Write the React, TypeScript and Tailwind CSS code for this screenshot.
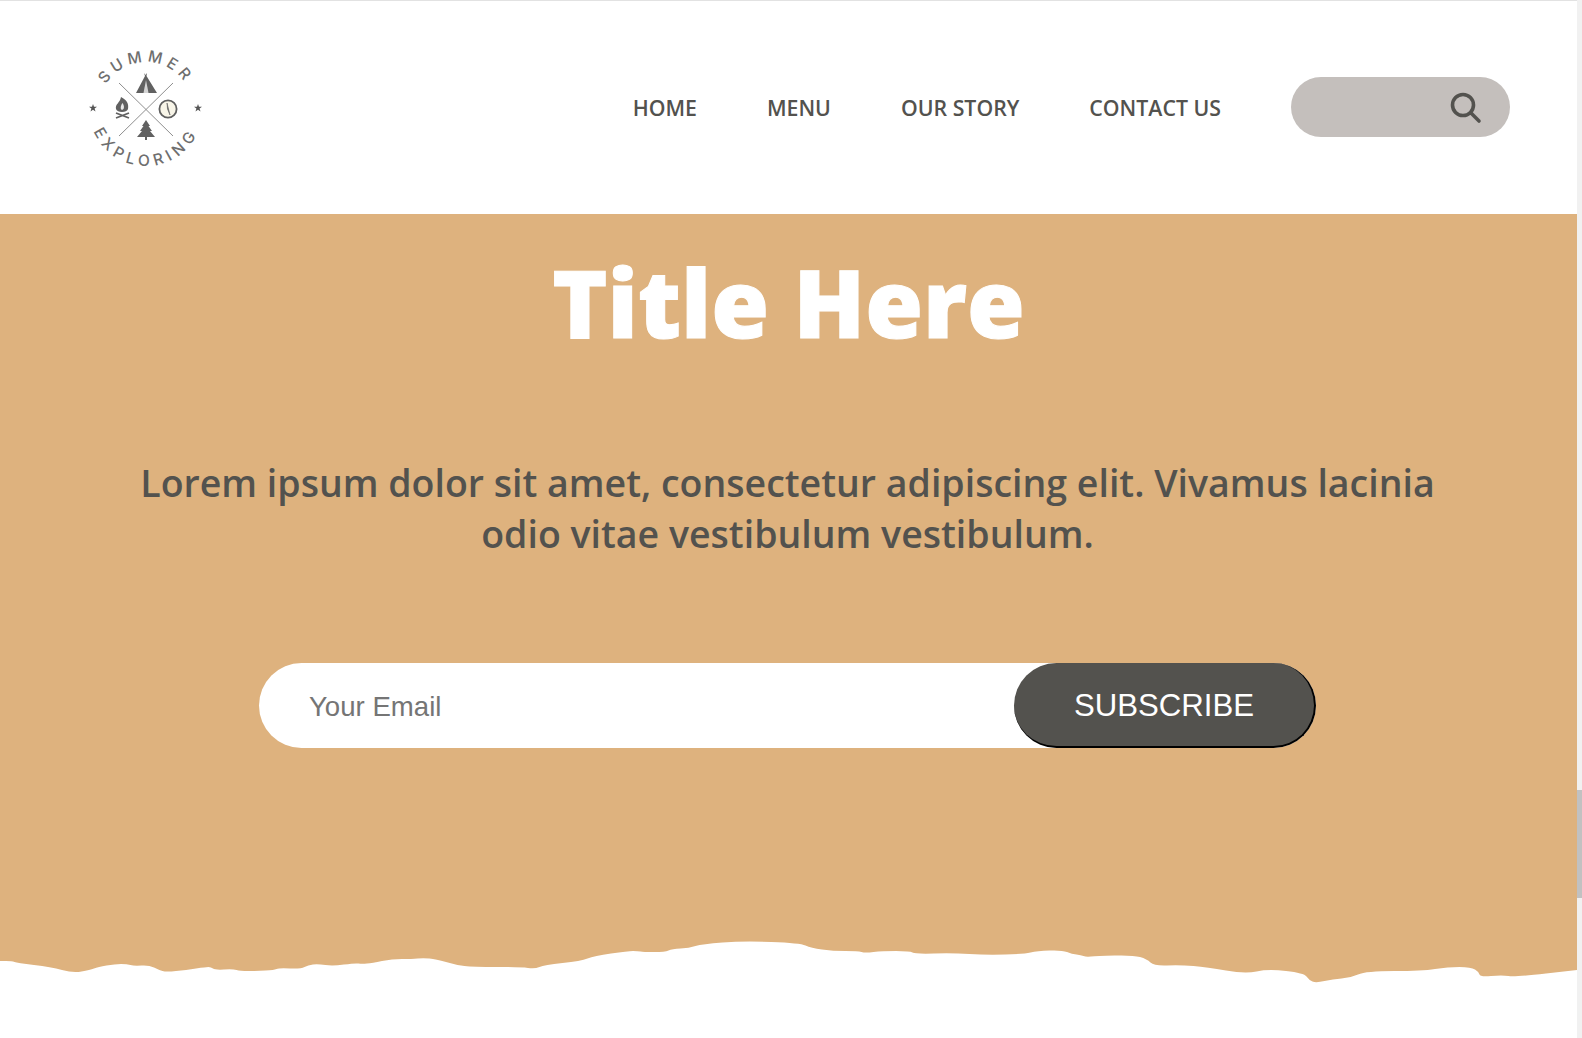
const navLinks = ['HOME', 'MENU', 'OUR STORY', 'CONTACT US']

// torn paper outline, left to right
const tornPoints: [number, number][] = [
  [0, 961], [12, 961], [17, 963], [51, 967], [73, 973], [90, 970], [98, 967], [115, 964], [127, 964], [134, 966],
  [149, 965], [159, 970], [166, 972], [186, 970], [206, 967], [211, 967], [215, 970], [233, 969], [240, 971], [257, 971],
  [274, 970], [279, 968], [301, 969], [308, 965], [318, 964], [333, 966], [355, 963], [362, 964], [372, 963], [392, 959],
  [412, 959], [423, 958], [436, 959], [456, 965], [473, 967], [521, 967], [535, 969], [544, 965], [581, 961], [594, 956],
  [628, 951], [638, 951], [643, 952], [665, 952], [672, 949], [689, 948], [702, 944], [743, 941], [800, 943], [811, 948],
  [833, 951], [858, 951], [865, 953], [882, 951], [910, 951], [915, 954], [953, 953], [986, 955], [1024, 954], [1037, 951],
  [1062, 950], [1072, 954], [1081, 955], [1086, 957], [1096, 956], [1133, 955], [1147, 959], [1154, 966], [1180, 965], [1207, 967],
  [1245, 974], [1268, 969], [1304, 973], [1309, 980], [1316, 983], [1333, 979], [1350, 978], [1366, 971], [1422, 971], [1448, 967],
  [1471, 967], [1479, 972], [1480, 977], [1502, 975], [1515, 977], [1577, 970],
]

function tornPath() {
  let d = `M0 930 L0 ${tornPoints[0][1]}`
  for (let i = 0; i < tornPoints.length - 1; i++) {
    const [x, y] = tornPoints[i]
    const [nx, ny] = tornPoints[i + 1]
    d += ` Q${x} ${y} ${(x + nx) / 2} ${(y + ny) / 2}`
  }
  return `${d} L1577 970 L1577 930 Z`
}

function Star({ x, y }: { x: number; y: number }) {
  return (
    <path
      transform={`translate(${x} ${y})`}
      d="M0 -4 L1 -1.2 L4 -1.2 L1.6 0.6 L2.5 3.5 L0 1.8 L-2.5 3.5 L-1.6 0.6 L-4 -1.2 L-1 -1.2 Z"
      fill="#555"
    />
  )
}

function Logo() {
  return (
    <svg width="160" height="154" viewBox="0 0 160 154" className="shrink-0">
      <defs>
        <path id="logo-top" d="M29 78 A47 47 0 0 1 123 78" />
        <path id="logo-bottom" d="M19 78 A57 57 0 0 0 133 78" />
      </defs>
      <text fontFamily="Inter, sans-serif" fontSize="15.5" fontWeight="500" fill="#6e6e6e" letterSpacing="4.5" textAnchor="middle">
        <textPath href="#logo-top" startOffset="50%">SUMMER</textPath>
      </text>
      <text fontFamily="Inter, sans-serif" fontSize="15.5" fontWeight="500" fill="#6e6e6e" letterSpacing="5" textAnchor="middle">
        <textPath href="#logo-bottom" startOffset="50%">EXPLORING</textPath>
      </text>
      <Star x={23} y={77} />
      <Star x={128} y={77} />
      {/* crossed lines */}
      <path d="M49 52 L103 105 M49 105 L103 52" stroke="#8f8f8f" strokeWidth="1" />
      {/* tent */}
      <path d="M66 62 L75 45 L74 42 L75.5 44 L77 42 L76.5 45 L87 62 Z" fill="#616161" />
      <path d="M76 49 L73.5 62 L78.5 62 Z" fill="#d4d4d4" />
      {/* campfire */}
      <path d="M51 66 C57 69 59 73 58 78 C57 82 47 82 46 78 C45 73 50 72 51 66 Z" fill="#616161" />
      <path d="M52.5 72 C54.5 75 54.5 78 52 79 C50 78 50.5 75 52.5 72 Z" fill="#e8e8e8" />
      <path d="M46 82 L59 87 M59 82 L46 87" stroke="#616161" strokeWidth="1.8" />
      {/* compass */}
      <circle cx="98" cy="78" r="8.6" fill="#f8f5e8" stroke="#5f5f5f" strokeWidth="1.8" />
      <path d="M97 72 L100 84 L97.5 78 Z" fill="#616161" stroke="#616161" strokeWidth="0.6" />
      {/* tree */}
      <path d="M76 89 L80 95 L78.5 95 L82 100 L80 100 L85 106 L77 106 L77 109 L75 109 L75 106 L67 106 L72 100 L70 100 L73.5 95 L72 95 Z" fill="#616161" />
    </svg>
  )
}

export default function App() {
  return (
    <div className="flex h-[1038px] w-full overflow-hidden bg-white font-['Open_Sans',sans-serif]">
      <div className="flex w-[1577px] shrink-0 flex-col">
        {/* Header */}
        <header className="flex h-[214px] items-center border-t border-[#e2e2e2] pl-[70px] pr-[67px]">
          <Logo />
          <nav className="ml-auto flex items-center gap-[70px]">
            {navLinks.map((link) => (
              <a key={link} href="#" className="text-[21.3px] font-semibold leading-none text-[#53524e]">
                {link}
              </a>
            ))}
            <div className="mb-[2px] flex h-[60px] w-[219px] items-center justify-end rounded-full bg-[#c4bfbc] pr-[27px]">
              <svg width="34" height="34" viewBox="0 0 34 34" fill="none" stroke="#53524e" strokeWidth="3.6" strokeLinecap="round">
                <circle cx="14" cy="15" r="10.5" />
                <path d="M22 23 L30 31" />
              </svg>
            </div>
          </nav>
        </header>

        {/* Hero */}
        <section className="flex h-[727px] flex-col items-center bg-[#deb27e]">
          <h1 className="mt-[30px] text-[93.6px] font-extrabold leading-[116px] text-white [-webkit-text-stroke:1px_white]">
            Title Here
          </h1>
          <p className="mr-[2px] mt-[97px] w-[1320px] text-center text-[37.5px] font-semibold leading-[51px] text-[#53524e]">
            Lorem ipsum dolor sit amet, consectetur adipiscing elit. Vivamus lacinia odio vitae vestibulum vestibulum.
          </p>
          <form className="mr-[2px] mt-[104px] flex h-[85px] w-[1057px] items-stretch rounded-full bg-white font-['Liberation_Sans',sans-serif]">
            <input
              type="text"
              placeholder="Your Email"
              className="min-w-0 flex-1 bg-transparent pl-[50px] pt-[2px] text-[27.6px] text-[#53524e] outline-none placeholder:text-[#757575]"
            />
            <button
              type="button"
              className="w-[302px] rounded-full border-b-2 border-r-2 border-black bg-[#53524e] pt-[4px] text-[31.2px] text-white"
            >
              SUBSCRIBE
            </button>
          </form>
        </section>

        {/* Torn paper edge */}
        <svg width="1577" height="97" viewBox="0 941 1577 97" className="block shrink-0">
          <path d={tornPath()} fill="#deb27e" />
        </svg>
      </div>

      {/* Scrollbar */}
      <div className="w-[5px] shrink-0 bg-[#f1f1f1]">
        <div className="mt-[790px] h-[108px] bg-[#c1c1c1]" />
      </div>
    </div>
  )
}
